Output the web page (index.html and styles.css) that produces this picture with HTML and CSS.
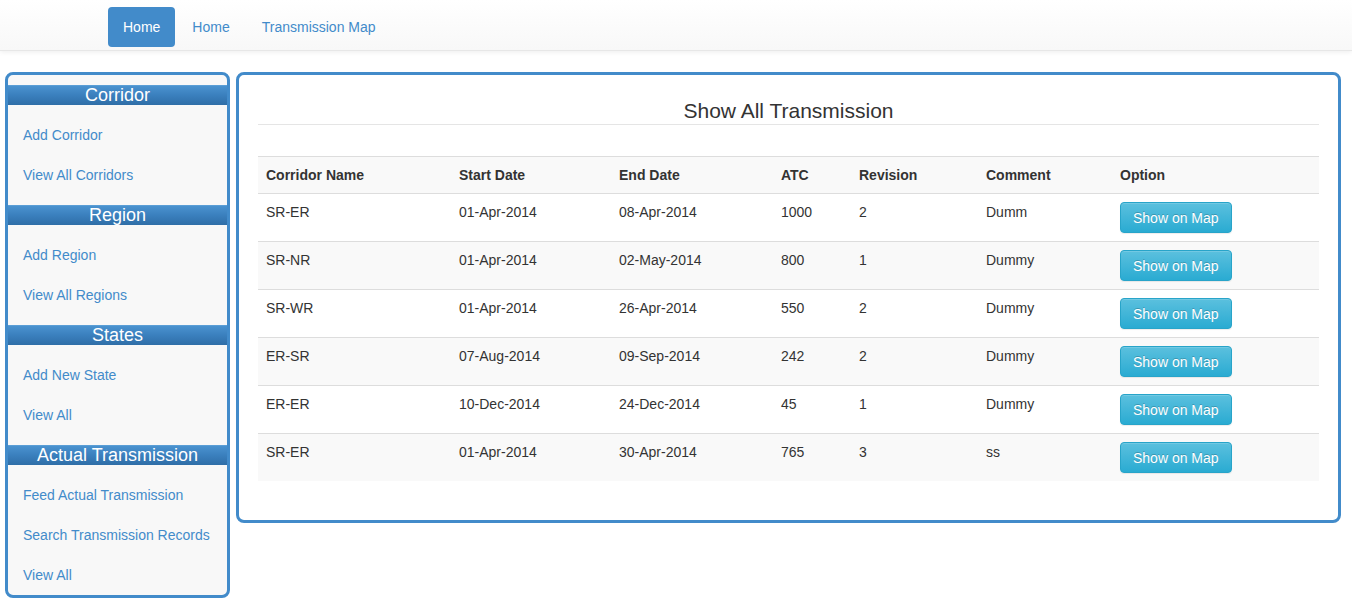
FILE: index.html
```html
<!DOCTYPE html>
<html>
<head>
<meta charset="utf-8">
<title>Show All Transmission</title>
<link rel="stylesheet" href="styles.css">
</head>
<body>
<div class="navbar">
  <ul class="nav">
    <li class="active"><a href="#">Home</a></li>
    <li><a href="#">Home</a></li>
    <li><a href="#">Transmission Map</a></li>
  </ul>
</div>
<div class="page">
  <aside class="sidebar">
    <div class="side-head">Corridor</div>
    <ul class="side-links">
      <li><a href="#">Add Corridor</a></li>
      <li><a href="#">View All Corridors</a></li>
    </ul>
    <div class="side-head">Region</div>
    <ul class="side-links">
      <li><a href="#">Add Region</a></li>
      <li><a href="#">View All Regions</a></li>
    </ul>
    <div class="side-head">States</div>
    <ul class="side-links">
      <li><a href="#">Add New State</a></li>
      <li><a href="#">View All</a></li>
    </ul>
    <div class="side-head">Actual Transmission</div>
    <ul class="side-links">
      <li><a href="#">Feed Actual Transmission</a></li>
      <li><a href="#">Search Transmission Records</a></li>
      <li><a href="#">View All</a></li>
    </ul>
  </aside>
  <main class="panel">
    <h3 class="title">Show All Transmission</h3>
    <table class="grid">
      <tbody>
        <tr class="head">
          <th class="c1">Corridor Name</th>
          <th class="c2">Start Date</th>
          <th class="c3">End Date</th>
          <th class="c4">ATC</th>
          <th class="c5">Revision</th>
          <th class="c6">Comment</th>
          <th class="c7">Option</th>
        </tr>
        <tr>
          <td>SR-ER</td><td>01-Apr-2014</td><td>08-Apr-2014</td><td>1000</td><td>2</td><td>Dumm</td>
          <td><button class="btn">Show on Map</button></td>
        </tr>
        <tr>
          <td>SR-NR</td><td>01-Apr-2014</td><td>02-May-2014</td><td>800</td><td>1</td><td>Dummy</td>
          <td><button class="btn">Show on Map</button></td>
        </tr>
        <tr>
          <td>SR-WR</td><td>01-Apr-2014</td><td>26-Apr-2014</td><td>550</td><td>2</td><td>Dummy</td>
          <td><button class="btn">Show on Map</button></td>
        </tr>
        <tr>
          <td>ER-SR</td><td>07-Aug-2014</td><td>09-Sep-2014</td><td>242</td><td>2</td><td>Dummy</td>
          <td><button class="btn">Show on Map</button></td>
        </tr>
        <tr>
          <td>ER-ER</td><td>10-Dec-2014</td><td>24-Dec-2014</td><td>45</td><td>1</td><td>Dummy</td>
          <td><button class="btn">Show on Map</button></td>
        </tr>
        <tr>
          <td>SR-ER</td><td>01-Apr-2014</td><td>30-Apr-2014</td><td>765</td><td>3</td><td>ss</td>
          <td><button class="btn">Show on Map</button></td>
        </tr>
      </tbody>
    </table>
  </main>
</div>
</body>
</html>
```

FILE: styles.css
```css
* { box-sizing: border-box; }

body {
  margin: 0;
  font-family: "Liberation Sans", Arial, sans-serif;
  font-size: 14px;
  line-height: 20px;
  color: #333;
  background: #fff;
}

a { color: #428bca; text-decoration: none; }

.navbar {
  height: 51px;
  background: linear-gradient(to bottom, #ffffff 0, #f8f8f8 100%);
  border-bottom: 1px solid #e7e7e7;
  box-shadow: 0 1px 5px rgba(0, 0, 0, 0.075);
}

.nav {
  list-style: none;
  margin: 0;
  padding: 7px 0 0 108px;
  display: flex;
  gap: 2px;
}

.nav a {
  display: block;
  padding: 10px 15px;
  line-height: 20px;
  border-radius: 4px;
}

.nav .active a {
  background: #428bca;
  color: #fff;
}

.page {
  display: flex;
  align-items: flex-start;
  gap: 6px;
  padding: 21px 11px 0 5px;
}

.sidebar {
  width: 225px;
  flex: none;
  border: 3px solid #428bca;
  border-radius: 8px;
  background: #f8f8f8;
  padding-top: 10px;
}

.side-head {
  height: 20px;
  font-size: 18px;
  line-height: 18px;
  color: #fff;
  text-align: center;
  background: linear-gradient(to bottom, #4a92cf 0, #3a7fbd 50%, #2f6ea7 100%);
  border-top: 1px solid #5a9ed6;
}

.side-links {
  list-style: none;
  margin: 0 0 10px;
  padding: 10px 0 0;
}

.side-links:last-child { margin-bottom: 0; }

.side-links a {
  display: block;
  padding: 10px 15px;
  line-height: 20px;
}

.panel {
  flex: 1;
  border: 3px solid #428bca;
  border-radius: 8px;
  background: #fff;
  padding: 19px;
}

.title {
  margin: 0;
  padding: 6px 0 2px;
  font-size: 21px;
  font-weight: normal;
  line-height: 22px;
  text-align: center;
  color: #333;
  border-bottom: 1px solid #e5e5e5;
}

.grid {
  width: 100%;
  margin: 31px 0 20px;
  border-collapse: collapse;
  table-layout: fixed;
}

.grid th,
.grid td {
  padding: 8px;
  line-height: 20px;
  text-align: left;
  vertical-align: top;
  border-top: 1px solid #ddd;
}

.grid th { font-weight: bold; }

.grid tr:nth-child(odd) { background: #f9f9f9; }

.c1 { width: 193px; }
.c2 { width: 160px; }
.c3 { width: 162px; }
.c4 { width: 78px; }
.c5 { width: 127px; }
.c6 { width: 134px; }

.btn {
  display: inline-block;
  height: 31px;
  padding: 6px 12px 4px;
  font-family: "Liberation Sans", Arial, sans-serif;
  font-size: 14px;
  line-height: 19px;
  color: #fff;
  background: linear-gradient(to bottom, #5bc0de 0, #2aabd2 100%);
  border: 1px solid #28a4c9;
  border-radius: 4px;
  box-shadow: inset 0 1px 0 rgba(255, 255, 255, 0.15), 0 1px 1px rgba(0, 0, 0, 0.075);
  text-shadow: 0 -1px 0 rgba(0, 0, 0, 0.2);
  cursor: pointer;
}
```
